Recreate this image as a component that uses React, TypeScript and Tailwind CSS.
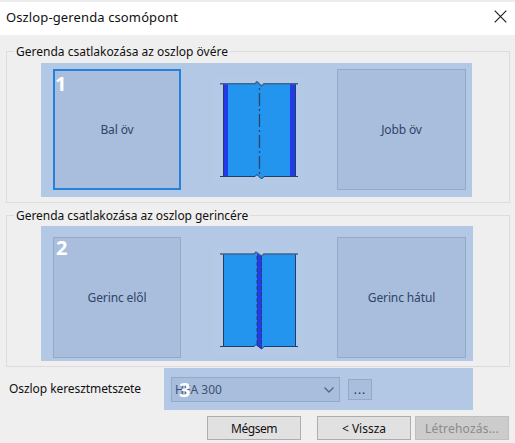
import type { ReactNode } from 'react';

function ChoiceButton({ label, selected = false, badge }: { label: string; selected?: boolean; badge?: string }) {
  return (
    <button
      className={`relative flex h-full shrink-0 items-center justify-center bg-[#a9bedc] text-[12px] text-[#2f4468] ${
        badge ? 'w-[128px]' : 'w-[129px]'
      } ${selected ? 'border-2 border-[#2482dc]' : 'border border-[#92a9ca]'}`}
    >
      {badge && (
        <span className={`absolute text-[20px] leading-none font-bold text-white ${selected ? 'left-0 top-[3px]' : 'left-[2px] top-0'}`}>
          {badge}
        </span>
      )}
      <span className="tracking-[-0.12px]">{label}</span>
    </button>
  );
}

function Group({ title, children, className, titleClass }: { title: string; children: ReactNode; className: string; titleClass: string }) {
  return (
    <section className={`relative ml-[6px] w-[504px] shrink-0 border border-[#dcdcdc] ${className}`}>
      <h2 className={`absolute left-[7px] top-[-8px] bg-[#efefef] px-[2px] text-[12px] leading-[16px] whitespace-nowrap ${titleClass}`}>
        {title}
      </h2>
      {children}
    </section>
  );
}

function FlangeDrawing() {
  return (
    <svg className="h-[109px] w-[93px] shrink-0 bg-[#b4c9e6]" viewBox="212 76 93 109">
      <path d="M223 84H255L257 82L262 86L264 84H296V177H264L262 179L257 175L255 177H223Z" fill="#2395ee" />
      <path d="M224 84h4v92h-4zM290 84h5v92h-5z" fill="#223ae8" />
      <path d="M223.5 84V176M295.5 84V176" stroke="#243d62" fill="none" />
      <path d="M220 83.8H255L257 81.7L261.5 86L264 83.8H298" stroke="#3c648f" strokeWidth="1.5" fill="none" />
      <path d="M220 176.5H255L257 174.5L261.5 179L264 176.5H298" stroke="#243d62" fill="none" />
      <path d="M259.5 88V174" stroke="#28466c" strokeWidth="1.3" strokeDasharray="2 3 13 3" />
    </svg>
  );
}

function WebDrawing() {
  return (
    <svg className="h-[109px] w-[93px] shrink-0 bg-[#b4c9e6]" viewBox="212 246 93 109">
      <path d="M223 254H254L256 252L262 256L264 254H296V347H264L262 349L256 345L254 347H223Z" fill="#2395ee" />
      <path d="M257 253L262 256V349L257 346Z" fill="#223ae8" />
      <path d="M223.5 254V346M295.5 254V346" stroke="#243d62" fill="none" />
      <path d="M220 254H254L256 252L261.5 256L264 254H298" stroke="#3c648f" strokeWidth="1.3" fill="none" />
      <path d="M220 346.5H254L256 344.5L261.5 349L264 346.5H298" stroke="#243d62" fill="none" />
      <path d="M257 256V346M261.5 256V347" stroke="#28406c" strokeDasharray="4 2" />
    </svg>
  );
}

export default function App() {
  return (
    <main className="flex h-[443px] w-[515px] flex-col overflow-hidden bg-[#efefef] font-['Noto_Sans','Open_Sans',sans-serif] text-[12px] text-[#111]">
      <header className="flex h-[35px] shrink-0 items-center justify-between border-t-2 border-[#ececec] bg-white pr-[8px] pl-[6px]">
        <h1 className="mt-[-2px] text-[13px] tracking-[0.12px] whitespace-nowrap">Oszlop-gerenda csomópont</h1>
        <svg className="mt-[-4px] h-[13px] w-[13px]" viewBox="0 0 13 13">
          <path d="M.7.7L12.3 12.3M12.3.7L.7 12.3" stroke="#222" strokeWidth="1.2" />
        </svg>
      </header>

      <Group title="Gerenda csatlakozása az oszlop övére" titleClass="tracking-[0px]" className="mt-[16px] h-[152px] pt-[11px] pl-[34px]">
        <div className="flex h-[134px] w-[431px] justify-between bg-[#b2c8e5] pt-[6px] pr-[6px] pb-[7px] pl-[12px]">
          <ChoiceButton label="Bal öv" selected badge="1" />
          <div className="mt-[7px] mr-[2px]"><FlangeDrawing /></div>
          <ChoiceButton label="Jobb öv" />
        </div>
      </Group>

      <Group title="Gerenda csatlakozása az oszlop gerincére" titleClass="tracking-[-0.05px]" className="mt-[12px] h-[152px] pt-[10px] pl-[34px]">
        <div className="flex h-[135px] w-[432px] justify-between bg-[#b2c8e5] pt-[11px] pr-[7px] pb-[3px] pl-[12px]">
          <ChoiceButton label="Gerinc elől" badge="2" />
          <div className="mt-[9px] mr-[2px]"><WebDrawing /></div>
          <ChoiceButton label="Gerinc hátul" />
        </div>
      </Group>

      <div className="mt-px flex h-[42px] shrink-0">
        <label className="w-[164px] pt-[12px] pl-[9px] leading-[18px] whitespace-nowrap tracking-[-0.07px]">Oszlop keresztmetszete</label>
        <div className="flex w-[309px] items-start bg-[#b2c8e5] pt-[9px] pl-[7px] text-[#3d5275]">
          <div className="relative flex h-[25px] w-[169px] items-center justify-between border border-[#92a9ca] bg-[#a9bedc] pr-[5px] pl-[3px]">
            <span className="pt-px">HEA 300</span>
            <span className="absolute top-[2px] left-[7px] text-[20px] leading-none font-bold text-white">3</span>
            <svg className="h-[6px] w-[10px]" viewBox="0 0 10 6">
              <path d="M.5.5L5 5L9.5.5" fill="none" stroke="#516789" strokeWidth="1.3" />
            </svg>
          </div>
          <button className="mt-[2px] ml-[8px] flex h-[21px] w-[24px] items-center justify-center border border-[#92a9ca] bg-[#a9bedc] tracking-[1px] text-[#1f3564]">...</button>
        </div>
      </div>

      <footer className="mt-[6px] flex h-[24px] shrink-0 pl-[207px]">
        <button className="w-[94px] border border-[#adadad] bg-[#e1e1e1] pt-px tracking-[-0.5px]">Mégsem</button>
        <button className="ml-[16px] w-[94px] border border-[#adadad] bg-[#e1e1e1] pt-px">&lt; Vissza</button>
        <button className="ml-[4px] w-[94px] border border-[#bfbfbf] bg-[#cccccc] pt-px tracking-[0.2px] text-[#8b8b8b]">Létrehozás...</button>
      </footer>
    </main>
  );
}
